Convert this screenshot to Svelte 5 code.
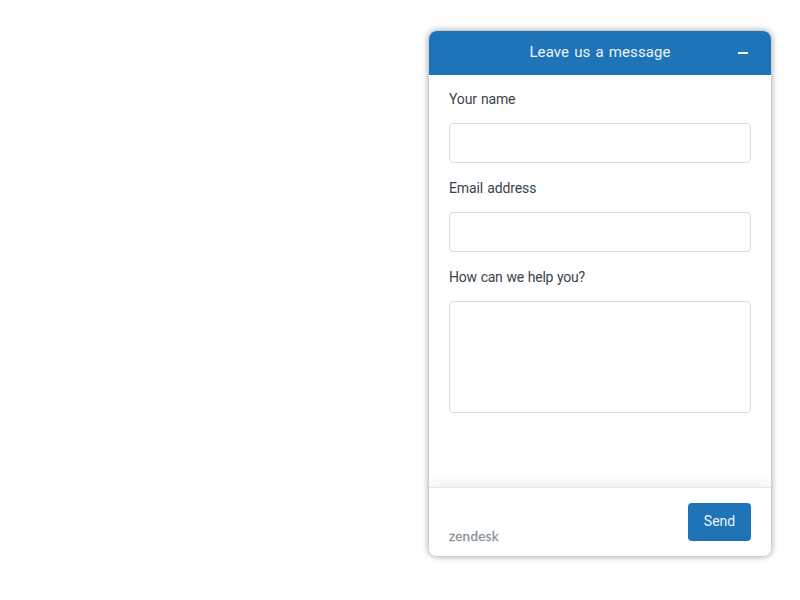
<script>
  const fields = [
    { id: 'name', label: 'Your name', spacing: -0.15 },
    { id: 'email', label: 'Email address', spacing: -0.12 },
    { id: 'message', label: 'How can we help you?', spacing: -0.28, multiline: true }
  ];
</script>

<main>
  <form class="widget" onsubmit={(event) => event.preventDefault()}>
    <header>
      <h1>Leave us a message</h1>
      <button class="minimize" type="button" aria-label="Minimize">
        <svg width="10" height="2" viewBox="0 0 10 2"><rect width="10" height="2" rx="0.3" fill="#fff" /></svg>
      </button>
    </header>
    <div class="content">
      {#each fields as field}
        <div class="field">
          <label for={field.id} style="letter-spacing: {field.spacing}px">{field.label}</label>
          {#if field.multiline}
            <textarea id={field.id}></textarea>
          {:else}
            <input id={field.id} />
          {/if}
        </div>
      {/each}
    </div>
    <footer>
      <span class="logo">zendesk</span>
      <button class="send" type="submit">Send</button>
    </footer>
  </form>
</main>

<style>
  :global(body) {
    background: #fff;
  }
  main {
    box-sizing: border-box;
    height: 600px;
    padding: 31px 29px 44px;
    display: flex;
    justify-content: flex-end;
    overflow: hidden;
    font-family: Roboto, "Liberation Sans", Arial, sans-serif;
    color: #39434b;
  }
  .widget {
    width: 342px;
    height: 525px;
    display: flex;
    flex-direction: column;
    border-radius: 8px;
    overflow: hidden;
    background: #fff;
    box-shadow: 0 0 6px 1px rgba(0, 0, 0, 0.33);
  }
  header {
    height: 44px;
    flex: none;
    display: grid;
    grid-template-columns: 48px 1fr 48px;
    align-items: center;
    background: #1f73b7;
    color: #fff;
  }
  h1 {
    grid-column: 2;
    margin: 0;
    padding-bottom: 2px;
    text-align: center;
    font-size: 15px;
    font-weight: 400;
    line-height: 20px;
    letter-spacing: 0.11px;
    word-spacing: 1.2px;
    color: #edf4fa;
  }
  button {
    border: 0;
    font: inherit;
    color: #fff;
  }
  .minimize {
    width: 40px;
    height: 40px;
    padding: 0;
    display: flex;
    align-items: center;
    justify-content: center;
    background: transparent;
  }
  .content {
    flex: 1;
    padding: 14px 20px 0;
    display: flex;
    flex-direction: column;
    gap: 15px;
  }
  .field {
    display: flex;
    flex-direction: column;
    gap: 14px;
  }
  label {
    font-size: 14px;
    line-height: 20px;
    word-spacing: 0.8px;
  }
  input,
  textarea {
    box-sizing: border-box;
    width: 100%;
    height: 40px;
    margin: 0;
    padding: 10px;
    border: 1px solid #d8dcde;
    border-radius: 4px;
    background: #fff;
    font: inherit;
    resize: none;
    outline: none;
  }
  textarea {
    height: 112px;
  }
  footer {
    box-sizing: border-box;
    height: 69px;
    flex: none;
    padding: 15px 20px;
    display: flex;
    justify-content: space-between;
    align-items: flex-end;
    border-top: 1px solid #e4e5e6;
    box-shadow: 0 -2px 14px rgba(0, 0, 0, 0.08);
    background: #fff;
  }
  .logo {
    color: #87929d;
    font: 400 13.5px/14px Lato, sans-serif;
    -webkit-text-stroke: 0.3px #87929d;
    letter-spacing: 0.25px;
    margin-bottom: -2px;
  }
  .send {
    width: 63px;
    height: 38px;
    padding: 0 0 2px;
    border-radius: 4px;
    background: #1f73b7;
    color: #edf4fa;
    font-size: 14px;
    letter-spacing: 0;
  }
</style>
